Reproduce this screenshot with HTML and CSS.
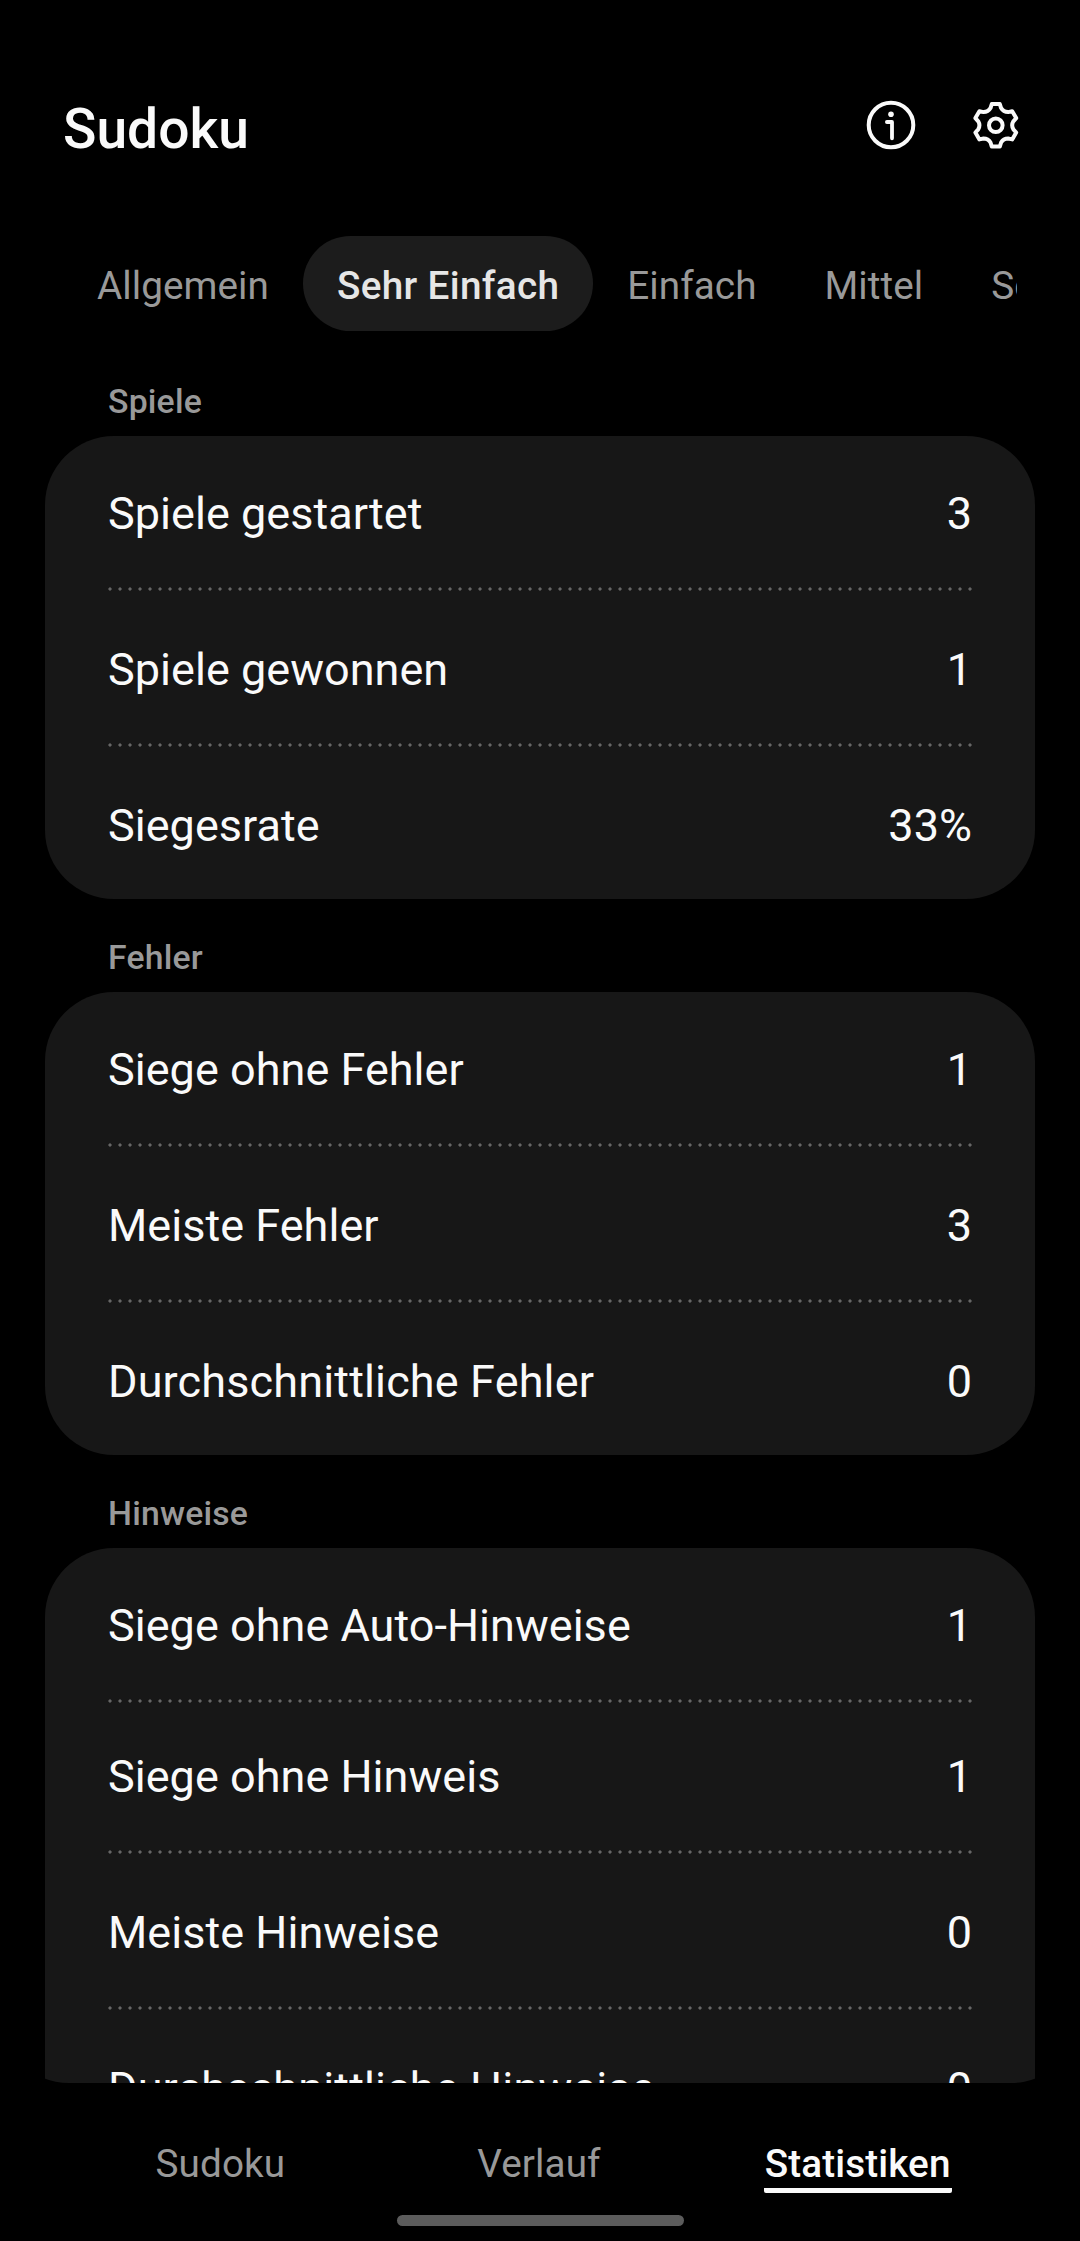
FILE: index.html
```html
<!DOCTYPE html>
<html lang="de">
<head>
<meta charset="utf-8">
<title>Sudoku</title>
<link rel="stylesheet" href="styles.css">
</head>
<body>
<div class="app">
  <header class="header">
    <h1 class="title">Sudoku</h1>
    <div class="actions">
      <svg class="icon" viewBox="0 0 56 56" fill="none" stroke="#fafafa" stroke-linecap="round" stroke-linejoin="round">
        <circle cx="28" cy="28" r="22.3" stroke-width="4"/>
        <circle cx="28" cy="17.3" r="2.8" fill="#fafafa" stroke="none"/>
        <path d="M23.9 25H29V41.3" stroke-width="3.8"/>
      </svg>
      <svg class="icon" viewBox="0 0 56 56" fill="none" stroke="#fafafa" stroke-width="4" stroke-linejoin="round">
        <g transform="translate(27.8 28.3)">
          <circle r="6.8"/>
          <path d="M-4-21.3H4L5.3-17.2Q7.6-13.2 12.25-13.2L16.4-14.1L20.4-7.2L17.55-4Q15.2 0 17.55 4L20.4 7.2L16.4 14.1L12.25 13.2Q7.6 13.2 5.3 17.2L4 21.3H-4L-5.3 17.2Q-7.6 13.2-12.25 13.2L-16.4 14.1L-20.4 7.2L-17.55 4Q-15.2 0-17.55-4L-20.4-7.2L-16.4-14.1L-12.25-13.2Q-7.6-13.2-5.3-17.2Z"/>
        </g>
      </svg>
    </div>
  </header>
  <nav class="tabs">
    <span class="tab">Allgemein</span>
    <span class="tab tab-active">Sehr Einfach</span>
    <span class="tab">Einfach</span>
    <span class="tab">Mittel</span>
    <span class="tab">Schwer</span>
  </nav>
  <main class="content">
    <h2 class="section">Spiele</h2>
    <div class="card">
      <div class="row"><span>Spiele gestartet</span><span>3</span></div>
      <div class="row"><span>Spiele gewonnen</span><span>1</span></div>
      <div class="row"><span>Siegesrate</span><span>33%</span></div>
    </div>
    <h2 class="section">Fehler</h2>
    <div class="card">
      <div class="row"><span>Siege ohne Fehler</span><span>1</span></div>
      <div class="row"><span>Meiste Fehler</span><span>3</span></div>
      <div class="row"><span class="long-label">Durchschnittliche Fehler</span><span>0</span></div>
    </div>
    <h2 class="section">Hinweise</h2>
    <div class="card">
      <div class="row"><span>Siege ohne Auto-Hinweise</span><span>1</span></div>
      <div class="row row-compact"><span>Siege ohne Hinweis</span><span>1</span></div>
      <div class="row"><span>Meiste Hinweise</span><span>0</span></div>
      <div class="row"><span class="long-label">Durchschnittliche Hinweise</span><span>0</span></div>
    </div>
  </main>
  <footer class="bottom">
    <nav class="bottom-nav">
      <span class="nav-item">Sudoku</span>
      <span class="nav-item">Verlauf</span>
      <span class="nav-item nav-active">Statistiken</span>
    </nav>
    <div class="home-bar"></div>
  </footer>
</div>
</body>
</html>
```
FILE: styles.css
```css
* { box-sizing: border-box; }

body {
  margin: 0;
  background: #000;
  color: #fafafa;
  font-family: Roboto, "Liberation Sans", sans-serif;
}

.app {
  width: 1080px;
  height: 2241px;
  display: flex;
  flex-direction: column;
  overflow: hidden;
}

.header {
  flex: none;
  height: 236px;
  padding: 96px 56px 0 63px;
  display: flex;
  justify-content: space-between;
  align-items: flex-start;
}

.title {
  margin: 0;
  font-size: 55.2px;
  font-weight: 500;
  line-height: 66px;
}

.actions {
  display: flex;
  gap: 49px;
  padding-top: 1px;
}

.icon {
  width: 56px;
  height: 56px;
  display: block;
}

.tabs {
  flex: none;
  height: 95px;
  margin: 0 63px;
  display: flex;
  overflow: hidden;
}

.tab {
  flex: none;
  padding: 0 34px;
  border-radius: 48px;
  font-size: 38.7px;
  line-height: 99px;
  letter-spacing: 0.05px;
  color: #999;
}

.tab-active {
  background: #1c1c1c;
  color: #e6e6e6;
  font-weight: 500;
  letter-spacing: 0.33px;
}

.content {
  flex: none;
  height: 1752px;
  padding: 12px 45px 0;
  overflow: hidden;
  border-radius: 0 0 69px 69px;
}

.section {
  height: 93px;
  margin: 0;
  padding: 39px 63px 0;
  font-size: 33.75px;
  font-weight: 500;
  line-height: 40px;
  letter-spacing: 0.2px;
  color: #999;
}

.card {
  padding: 0 63px;
  border-radius: 69px;
  background: #171717;
}

.row {
  height: 156px;
  display: flex;
  justify-content: space-between;
  font-size: 45px;
  line-height: 158px;
  letter-spacing: 0.03px;
  background: radial-gradient(circle at center, #666 1.2px, transparent 2px) -3px 100% / 10px 4px repeat-x;
}

.row:first-child {
  height: 155px;
  line-height: 156px;
}

.row:last-child {
  height: 152px;
  background: none;
}

.row-compact {
  height: 151px;
  line-height: 148px;
}

.long-label {
  letter-spacing: 0.14px;
}

.bottom {
  flex: 1;
  display: flex;
  flex-direction: column;
  align-items: center;
  padding-top: 56px;
}

.bottom-nav {
  width: 956px;
  margin-right: 2px;
  display: grid;
  grid-template-columns: repeat(3, 1fr);
  justify-items: center;
}

.nav-item {
  height: 54px;
  padding: 0 1px;
  font-size: 38.7px;
  line-height: 49px;
  letter-spacing: 0.1px;
  color: #999;
}

.nav-active {
  color: #fafafa;
  font-weight: 500;
  border-bottom: 5px solid #fafafa;
  border-radius: 2px;
}

.home-bar {
  width: 287px;
  height: 11px;
  margin-top: 22px;
  border-radius: 6px;
  background: #5c5c5c;
}
```
